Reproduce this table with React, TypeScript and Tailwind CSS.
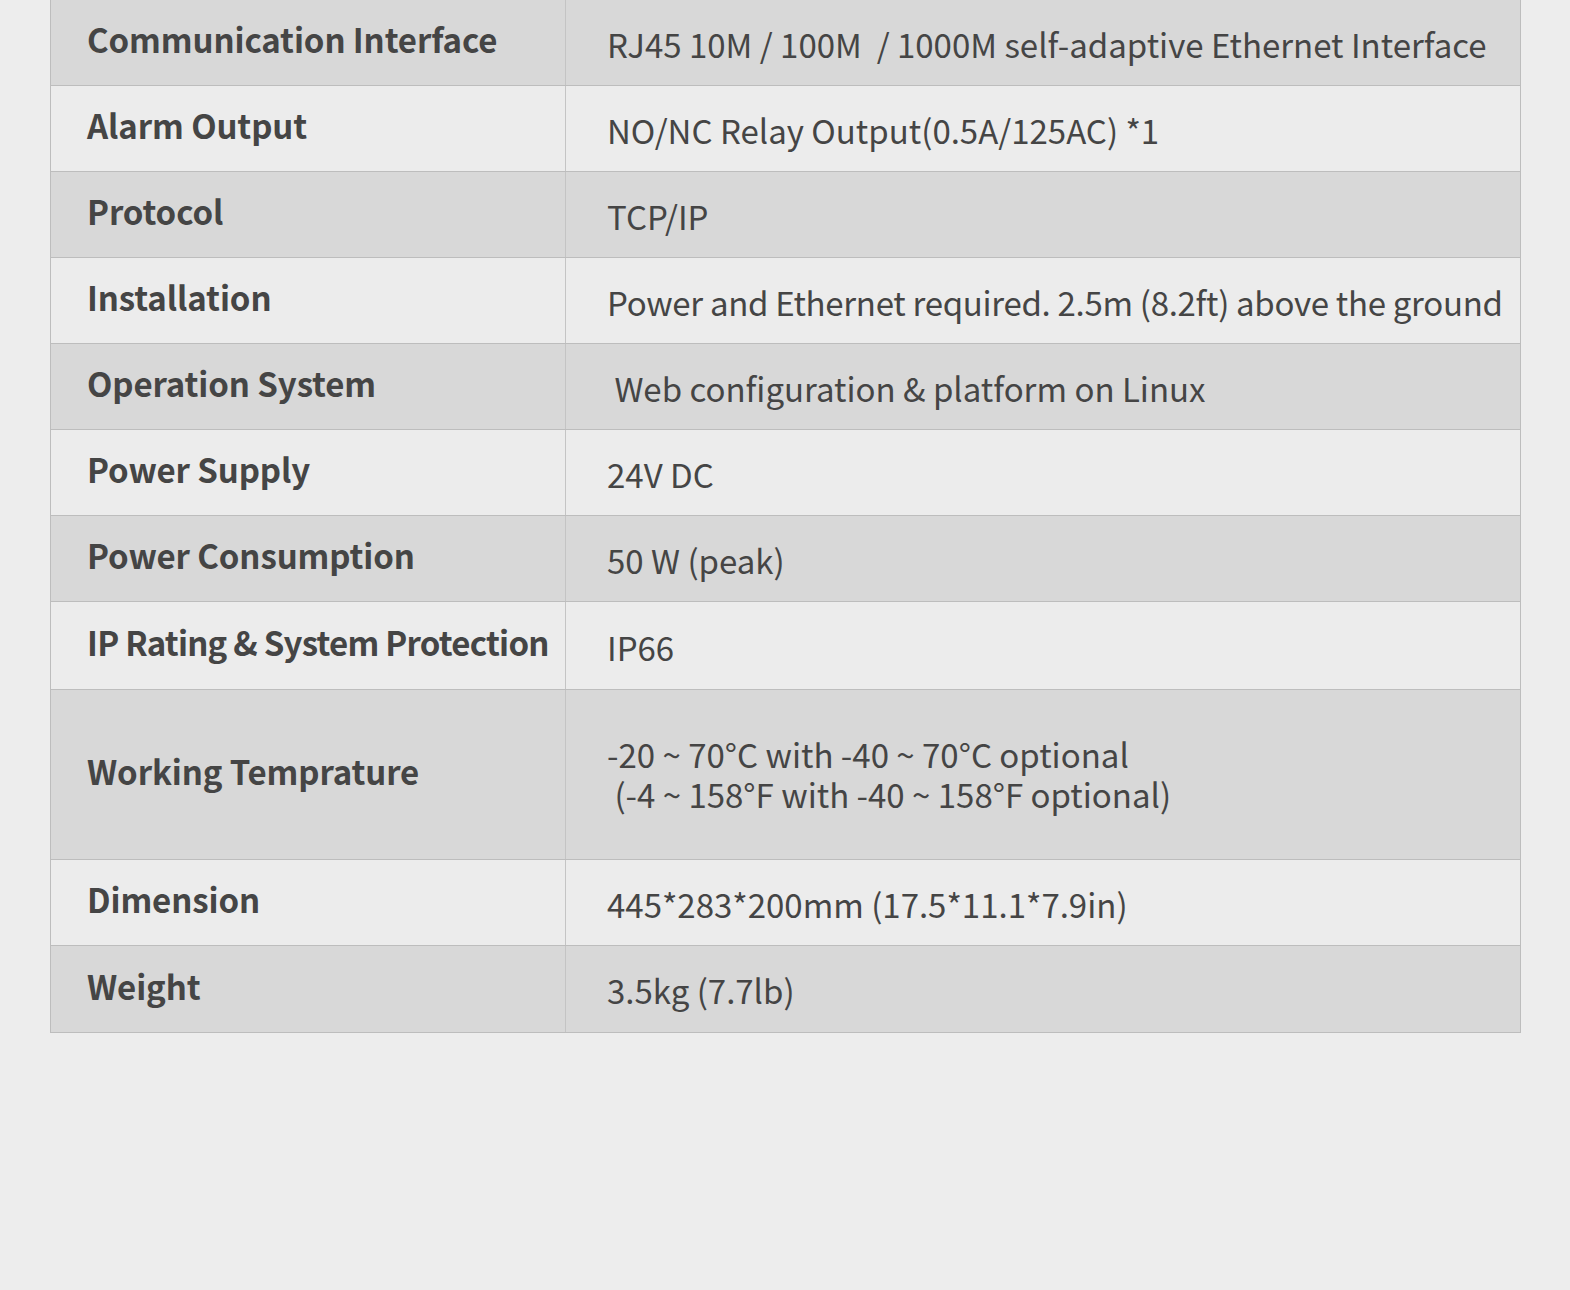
const rows: { label: string; value: string[]; h: string; tight?: boolean; tightValue?: boolean }[] = [
  { label: 'Communication Interface', value: ['RJ45 10M / 100M  / 1000M self-adaptive Ethernet Interface'], h: 'h-[85px]' },
  { label: 'Alarm Output', value: ['NO/NC Relay Output(0.5A/125AC) *1'], h: 'h-[86px]' },
  { label: 'Protocol', value: ['TCP/IP'], h: 'h-[86px]' },
  {
    label: 'Installation',
    value: ['Power and Ethernet required. 2.5m (8.2ft) above the ground'],
    h: 'h-[86px]',
    tightValue: true,
  },
  { label: 'Operation System', value: [' Web configuration & platform on Linux'], h: 'h-[86px]' },
  { label: 'Power Supply', value: ['24V DC'], h: 'h-[86px]' },
  { label: 'Power Consumption', value: ['50 W (peak)'], h: 'h-[86px]' },
  { label: 'IP Rating & System Protection', value: ['IP66'], h: 'h-[88px]', tight: true },
  {
    label: 'Working Temprature',
    value: ['-20 ~ 70°C with -40 ~ 70°C optional', ' (-4 ~ 158°F with -40 ~ 158°F optional)'],
    h: 'h-[170px]',
  },
  { label: 'Dimension', value: ['445*283*200mm (17.5*11.1*7.9in)'], h: 'h-[86px]' },
  { label: 'Weight', value: ['3.5kg (7.7lb)'], h: 'h-[87px]' },
]

function App() {
  return (
    <div
      className="w-full min-h-[1290px] bg-[#ededed] text-[#454545]"
      style={{ fontFamily: '"Noto Sans CJK SC", "Noto Sans", sans-serif' }}
    >
      <div className="ml-[50px] w-[1471px] border-x border-b border-[#bdbdbd]">
        {rows.map((row, i) => (
          <div
            key={row.label}
            className={`flex ${row.h} ${i > 0 ? 'border-t border-[#bdbdbd]' : ''} ${
              i % 2 === 0 ? 'bg-[#d8d8d8]' : 'bg-[#ececec]'
            }`}
          >
            <div className="w-[515px] shrink-0 border-r border-[#c4c4c4] flex items-center pl-[36px] pb-[6px]">
              <span
                className={`text-[33px] font-bold leading-none whitespace-nowrap ${
                  row.tight ? 'tracking-[-0.75px]' : 'tracking-[-0.1px]'
                }`}
              >
                {row.label}
              </span>
            </div>
            <div
              className={`flex-1 flex flex-col justify-center pl-[41px] ${
                row.value.length > 1 ? 'pb-[2px]' : 'pt-[2px]'
              }`}
            >
              {row.value.map((v) => (
                <div
                  key={v}
                  className={`text-[33px] leading-[40px] whitespace-pre ${row.tightValue ? 'tracking-[-0.3px]' : ''}`}
                >
                  {v}
                </div>
              ))}
            </div>
          </div>
        ))}
      </div>
    </div>
  )
}

export default App
